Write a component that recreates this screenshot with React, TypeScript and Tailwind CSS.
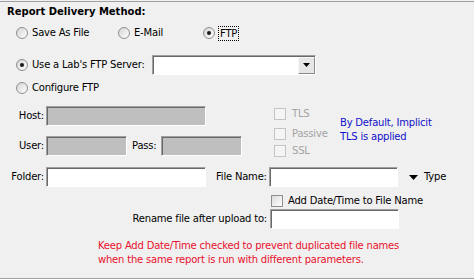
import React from 'react';

function Radio({ checked }: { checked?: boolean }) {
  return (
    <span className="relative inline-flex w-[12px] h-[12px] shrink-0 items-center justify-center rounded-full border border-[#8f8f8f] bg-linear-to-br from-[#d4d4d4] to-white">
      {checked && <span className="w-[4px] h-[4px] rounded-full bg-[#1a1a1a]" />}
    </span>
  );
}

function Check({ disabled }: { disabled?: boolean }) {
  return (
    <span
      className={
        disabled
          ? 'inline-block w-[12px] h-[12px] shrink-0 border border-[#c4c4c4] bg-[#f4f4f4]'
          : 'inline-block w-[12px] h-[12px] shrink-0 border border-[#8f8f8f] bg-linear-to-br from-[#dcdcdc] to-white'
      }
    />
  );
}

function TextBox({ className = '', gray }: { className?: string; gray?: boolean }) {
  return (
    <div
      className={`h-[20px] border border-t-[#a0a0a0] border-l-[#a0a0a0] border-r-white border-b-white shadow-[inset_1px_1px_0_#696969] ${
        gray ? 'bg-[#bfbfbf]' : 'bg-white'
      } ${className}`}
    />
  );
}

export default function App() {
  return (
    <div
      className="w-[474px] h-[279px] bg-[#f0f0f0] pt-px text-[10px] tracking-[-0.2px] text-black leading-[14px]"
      style={{ fontFamily: '"DejaVu Sans", Verdana, sans-serif' }}
    >
      <div className="h-[278px] border-y border-[#a0a0a0]">
        {/* Heading */}
        <div className="mt-[3px] h-[14px] pl-[7px] font-bold tracking-normal">Report Delivery Method:</div>

        {/* Delivery method radios */}
        <div className="mt-[5px] h-[18px] flex items-center">
          <div className="ml-[16px] w-[102px] flex items-center gap-[4px]">
            <Radio />
            <span>Save As File</span>
          </div>
          <div className="w-[85px] flex items-center gap-[4px]">
            <Radio />
            <span>E-Mail</span>
          </div>
          <div className="flex items-center gap-[3px]">
            <Radio checked />
            <span className="border border-dotted border-black h-[15px] px-px leading-[13px]">FTP</span>
          </div>
        </div>

        {/* Lab FTP server */}
        <div className="mt-[13px] h-[19px] flex items-center">
          <div className="ml-[16px] flex items-center gap-[4px]">
            <Radio checked />
            <span>Use a Lab's FTP Server:</span>
          </div>
          <div className="ml-auto mr-[158px] w-[164px] h-[20px] flex border border-t-[#a0a0a0] border-l-[#a0a0a0] border-r-white border-b-white shadow-[inset_1px_1px_0_#696969] bg-white">
            <div className="flex-1" />
            <div className="mt-px w-[17px] h-[17px] flex items-center justify-center bg-[#e6e6e6] border border-t-[#f8f8f8] border-l-[#f8f8f8] border-r-[#8a8a8a] border-b-[#8a8a8a]">
              <svg width="7" height="4" viewBox="0 0 7 4">
                <path d="M0 0h7L3.5 4z" fill="#000" />
              </svg>
            </div>
          </div>
        </div>

        {/* Configure FTP */}
        <div className="mt-[7px] h-[14px] flex items-center">
          <div className="ml-[16px] flex items-center gap-[4px]">
            <Radio />
            <span>Configure FTP</span>
          </div>
        </div>

        {/* Host / User / Pass + options */}
        <div className="mt-[11px] h-[50px] flex">
          <div className="flex flex-col">
            <div className="flex items-center h-[20px]">
              <span className="w-[46px] pr-[2px] text-right">Host:</span>
              <TextBox gray className="w-[160px]" />
            </div>
            <div className="mt-[10px] flex items-center h-[20px]">
              <span className="w-[46px] pr-[2px] text-right">User:</span>
              <TextBox gray className="w-[81px]" />
              <span className="ml-[5px] w-[29px]">Pass:</span>
              <TextBox gray className="w-[81px]" />
            </div>
          </div>
          <div className="ml-[32px] flex flex-col text-[#a3a3a3]">
            <div className="mt-px h-[13px] flex items-center gap-[6px]">
              <Check disabled />
              <span>TLS</span>
            </div>
            <div className="mt-[7px] h-[13px] flex items-center gap-[6px]">
              <Check disabled />
              <span>Passive</span>
            </div>
            <div className="mt-[4px] h-[13px] flex items-center gap-[6px]">
              <Check disabled />
              <span>SSL</span>
            </div>
          </div>
          <div className="ml-auto w-[134px] mt-[10px] text-[#1010c8]">
            <div>By Default, Implicit</div>
            <div>TLS is applied</div>
          </div>
        </div>

        {/* Folder / File Name */}
        <div className="mt-[11px] h-[20px] flex items-center">
          <span className="w-[46px] pr-[2px] text-right">Folder:</span>
          <TextBox className="w-[160px]" />
          <span className="ml-[10px] w-[53px]">File Name:</span>
          <TextBox className="w-[129px]" />
          <svg className="ml-[11px]" width="9" height="5" viewBox="0 0 9 5">
            <path d="M0 0h9L4.5 5z" fill="#000" />
          </svg>
          <span className="ml-[6px]">Type</span>
        </div>

        {/* Add date/time */}
        <div className="mt-[7px] h-[13px] flex items-center">
          <div className="ml-[271px] flex items-center gap-[5px]">
            <Check />
            <span>Add Date/Time to File Name</span>
          </div>
        </div>

        {/* Rename */}
        <div className="mt-[2px] h-[20px] flex items-center">
          <span className="w-[270px] pr-[3px] text-right">Rename file after upload to:</span>
          <TextBox className="w-[129px]" />
        </div>

        {/* Warning */}
        <div className="mt-[10px] pl-[98px] text-[#e8112d]">
          <div>Keep Add Date/Time checked to prevent duplicated file names</div>
          <div>when the same report is run with different parameters.</div>
        </div>
      </div>
    </div>
  );
}
